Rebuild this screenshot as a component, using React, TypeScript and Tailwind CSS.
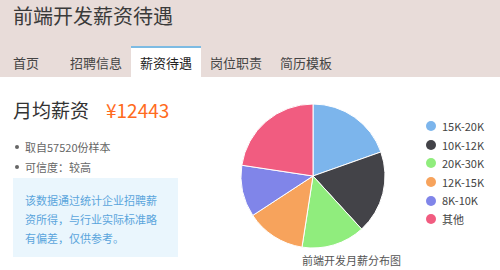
import React from 'react'

const tabs = ['首页', '招聘信息', '薪资待遇', '岗位职责', '简历模板']

const slices = [
  { label: '15K-20K', color: '#7cb5ec', deg: 70.5 },
  { label: '10K-12K', color: '#434348', deg: 67 },
  { label: '20K-30K', color: '#90ed7d', deg: 51.3 },
  { label: '12K-15K', color: '#f7a35c', deg: 48 },
  { label: '8K-10K', color: '#8085e9', deg: 41.8 },
  { label: '其他', color: '#f15c80', deg: 81.4 },
]

function Pie() {
  const cx = 75
  const cy = 75
  const r = 72
  let start = 0
  const pt = (deg: number) => {
    const a = (deg * Math.PI) / 180
    return `${(cx + r * Math.sin(a)).toFixed(2)} ${(cy - r * Math.cos(a)).toFixed(2)}`
  }
  return (
    <svg width="150" height="150" viewBox="0 0 150 150">
      {slices.map((s) => {
        const end = start + s.deg
        const d = `M${cx} ${cy} L${pt(start)} A${r} ${r} 0 ${s.deg > 180 ? 1 : 0} 1 ${pt(end)} Z`
        start = end
        return <path key={s.label} d={d} fill={s.color} stroke="#fff" strokeWidth="1" strokeLinejoin="round" />
      })}
    </svg>
  )
}

export default function App() {
  return (
    <div className="w-[500px] h-[270px] overflow-hidden bg-white text-[#333]" style={{ fontFamily: '"Noto Sans CJK SC", "Noto Sans", sans-serif' }}>
      {/* header */}
      <div className="h-[77px] bg-[#e8dcd9] flex flex-col">
        <h1 className="pl-[13px] pt-[3px] text-[20px] leading-[26px] text-[#3a3a3a] font-normal">前端开发薪资待遇</h1>
        <ul className="mt-auto flex pl-[4px] h-[31px]">
          {tabs.map((t, i) => (
            <li
              key={t}
              className={
                (i === 0 ? 'w-[57px] ' : 'w-[70px] ') +
                (i === 2 ? 'bg-white border-t-2 border-[#7dbbe3] text-[#222] ' : 'border-t-2 border-transparent text-[#444] ') +
                'pl-[9px] text-[13px] leading-[29px]'
              }
            >
              {t}
            </li>
          ))}
        </ul>
      </div>

      {/* main */}
      <div className="flex">
        <div className="w-[200px] shrink-0 pl-[13px] pt-[21px]">
          <div className="flex items-center text-[19px] leading-[24px]">
            <span className="text-[#333]">月均薪资</span>
            <span className="ml-[17px] text-[#ff6b1d]">¥12443</span>
          </div>
          <ul className="mt-[15px] text-[11px] text-[#666]">
            <li className="flex items-center h-[20px]">
              <span className="w-[4px] h-[4px] rounded-full bg-[#666] ml-[2px] mr-[6px]" />
              取自57520份样本
            </li>
            <li className="flex items-center h-[20px]">
              <span className="w-[4px] h-[4px] rounded-full bg-[#666] ml-[2px] mr-[6px]" />
              可信度：较高
            </li>
          </ul>
          <div className="mt-[1px] w-[165px] h-[79px] bg-[#eaf6fd] px-[12px] pt-[13px] text-[11px] leading-[19px] text-[#5aa5dc]">
            该数据通过统计企业招聘薪资所得，与行业实际标准略有偏差，仅供参考。
          </div>
        </div>

        <div className="w-[150px] shrink-0 ml-[38px] mt-[24px] flex flex-col">
          <Pie />
          <div className="ml-[64px] mt-[2px] text-[11px] leading-[14px] text-[#555] whitespace-nowrap">前端开发月薪分布图</div>
        </div>

        <ul className="ml-[38px] mt-[40px]">
          {slices.map((s) => (
            <li key={s.label} className="flex items-center h-[18.6px] text-[11px] text-[#444] whitespace-nowrap">
              <span className="w-[10px] h-[10px] rounded-full mr-[6px]" style={{ backgroundColor: s.color }} />
              {s.label}
            </li>
          ))}
        </ul>
      </div>
    </div>
  )
}
